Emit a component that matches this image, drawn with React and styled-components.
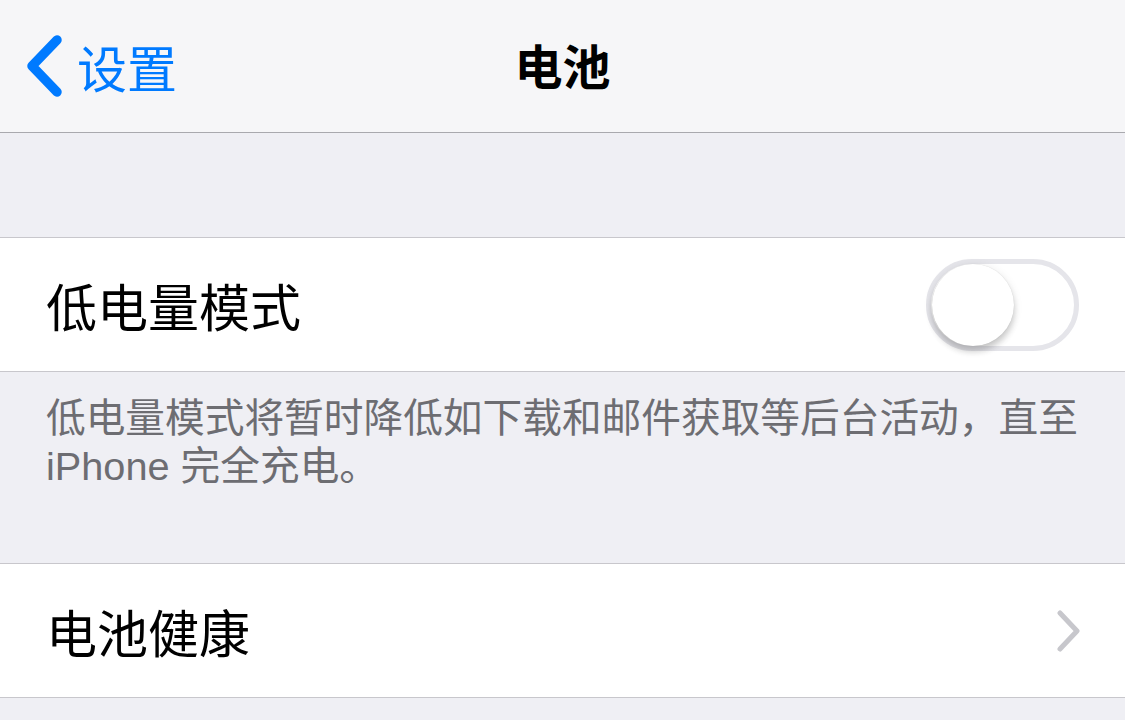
import React from 'react'
import styled, { createGlobalStyle } from 'styled-components'

const GlobalStyle = createGlobalStyle`
  html, body {
    margin: 0;
    padding: 0;
    background: #efeff4;
  }
  body {
    font-family: "Liberation Sans", "Noto Sans CJK SC", sans-serif;
    -webkit-font-smoothing: antialiased;
  }
`

const Page = styled.div`
  width: 1125px;
  min-height: 720px;
  background: #efeff4;
`

const NavBar = styled.header`
  position: relative;
  height: 132px;
  background: #f6f6f8;
  border-bottom: 1px solid #a9a9ae;
  display: flex;
  align-items: center;
  justify-content: center;
`

const BackButton = styled.div`
  position: absolute;
  left: 26px;
  top: 0;
  bottom: 0;
  display: flex;
  align-items: center;
  gap: 13px;
  color: #007aff;
  font-size: 50px;
  font-family: "Noto Sans CJK SC", sans-serif;
`

const Title = styled.h1`
  margin: 0 0 4px;
  font-size: 48px;
  font-weight: 600;
  color: #000;
  font-family: "Noto Sans CJK SC", sans-serif;
`

const Gap = styled.div`
  height: ${p => p.h}px;
`

const Group = styled.section`
  background: #fff;
  border-top: 1px solid #c8c7cc;
  border-bottom: 1px solid #c8c7cc;
`

const Row = styled.div`
  height: 133px;
  display: flex;
  align-items: center;
  justify-content: space-between;
  padding: 0 ${p => p.pr || 46}px 0 ${p => p.pl || 46}px;
`

const Label = styled.span`
  font-size: 51px;
  color: #000;
  font-family: "Noto Sans CJK SC", sans-serif;
`

const Footer = styled.p`
  margin: 0;
  padding: 22px 38px 73px 46px;
  font-size: 39.7px;
  line-height: 48px;
  color: #6d6d72;
`

const Track = styled.div`
  position: relative;
  box-sizing: border-box;
  width: 153px;
  height: 92px;
  border: 5px solid #e5e5ea;
  border-radius: 46px;
  background: #fff;
`

const Knob = styled.div`
  position: absolute;
  left: 1px;
  top: 0;
  width: 82px;
  height: 82px;
  border-radius: 50%;
  background: #fff;
  box-shadow: 0 6px 6px rgba(0, 0, 0, 0.16), 0 2px 10px rgba(0, 0, 0, 0.1), 0 0 1px rgba(0, 0, 0, 0.15);
`

const Switch = () => (
  <Track>
    <Knob />
  </Track>
)

const BackChevron = () => (
  <svg width="38" height="66" viewBox="0 0 38 66">
    <path d="M31 7 L6 33 L31 59" fill="none" stroke="#007aff" strokeWidth="9.5" strokeLinecap="round" strokeLinejoin="round" />
  </svg>
)

const Disclosure = () => (
  <svg width="26" height="42" viewBox="0 0 26 42">
    <path d="M4 3 L21 21 L4 39" fill="none" stroke="#c7c7cc" strokeWidth="5" strokeLinecap="round" strokeLinejoin="round" />
  </svg>
)

const App = () => {
  return (
    <Page>
      <GlobalStyle />
      <NavBar>
        <BackButton>
          <BackChevron />
          <span>设置</span>
        </BackButton>
        <Title>电池</Title>
      </NavBar>
      <Gap h={104} />
      <Group>
        <Row>
          <Label>低电量模式</Label>
          <Switch />
        </Row>
      </Group>
      <Footer>低电量模式将暂时降低如下载和邮件获取等后台活动，直至 iPhone 完全充电。</Footer>
      <Group>
        <Row pl={46} pr={43}>
          <Label>电池健康</Label>
          <Disclosure />
        </Row>
      </Group>
    </Page>
  )
}

export default App
